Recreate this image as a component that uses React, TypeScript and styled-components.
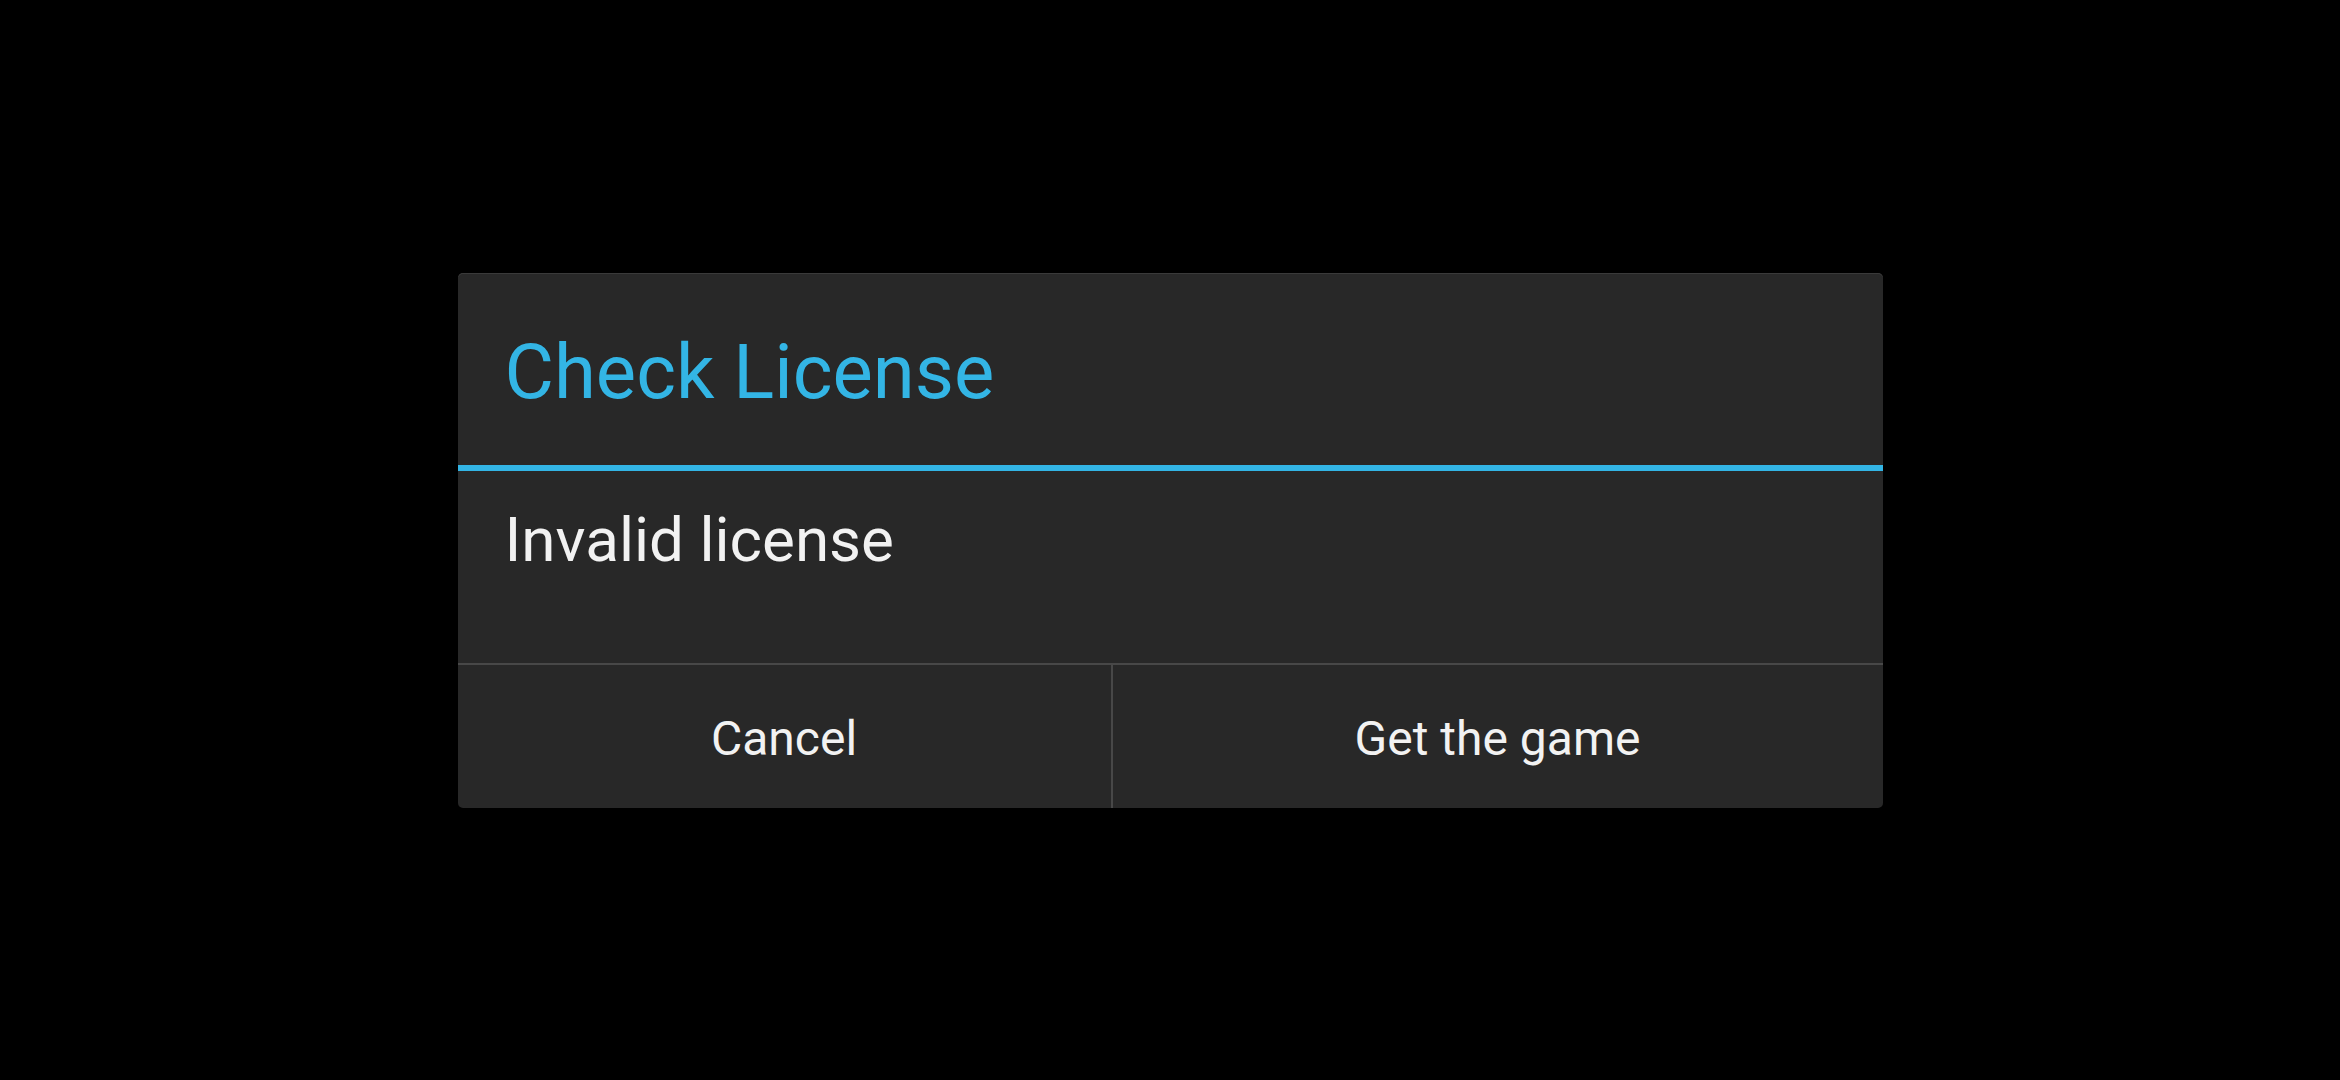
import styled, { createGlobalStyle } from "styled-components";

const GlobalStyle = createGlobalStyle`
  html, body {
    margin: 0;
    padding: 0;
    background: #000000;
  }

  body {
    font-family: Roboto, "Noto Sans", "Liberation Sans", sans-serif;
  }
`;

type DialogButtonProps = {
  label: string;
  divider?: boolean;
};

function DialogButton({ label, divider }: DialogButtonProps) {
  return <Button $divider={divider}>{label}</Button>;
}

function App() {
  return (
    <>
      <GlobalStyle />
      <Screen>
        <Dialog>
          <TitleBar>
            <Title>Check License</Title>
          </TitleBar>
          <Accent />
          <Body>
            <Message>Invalid license</Message>
          </Body>
          <ButtonRow>
            <DialogButton label="Cancel" />
            <DialogButton label="Get the game" divider />
          </ButtonRow>
        </Dialog>
      </Screen>
    </>
  );
}

export default App;

const Screen = styled.div`
  width: 2340px;
  height: 1080px;
  display: flex;
  align-items: center;
  justify-content: center;
  background: #000000;
`;

const Dialog = styled.div`
  width: 1425px;
  height: 535px;
  display: flex;
  flex-direction: column;
  background: #282828;
  border-radius: 5px;
  box-shadow: inset 0 1px 0 #3a3a3a;
  overflow: hidden;
`;

const TitleBar = styled.div`
  height: 192px;
  box-sizing: border-box;
  padding: 61px 47px 0;
`;

const Title = styled.h1`
  margin: 0;
  font-weight: 400;
  font-size: 76px;
  line-height: 1;
  color: #33b5e5;
`;

const Accent = styled.div`
  height: 6px;
  background: #33b5e5;
`;

const Body = styled.div`
  height: 194px;
  box-sizing: border-box;
  padding: 38px 47px 0;
  border-bottom: 2px solid #484848;
`;

const Message = styled.p`
  margin: 0;
  font-weight: 400;
  font-size: 62px;
  line-height: 1;
  color: #f2f2f2;
`;

const ButtonRow = styled.div`
  flex: 1;
  display: grid;
  grid-template-columns: 653px 1fr;
`;

const Button = styled.button<{ $divider?: boolean }>`
  display: flex;
  align-items: center;
  justify-content: center;
  margin: 0;
  padding: 4px 0 0;
  border: none;
  border-left: ${(p) => (p.$divider ? "2px solid #484848" : "none")};
  background: transparent;
  font-family: Roboto, "Noto Sans", "Liberation Sans", sans-serif;
  font-weight: 400;
  font-size: 48px;
  color: #f2f2f2;
`;
